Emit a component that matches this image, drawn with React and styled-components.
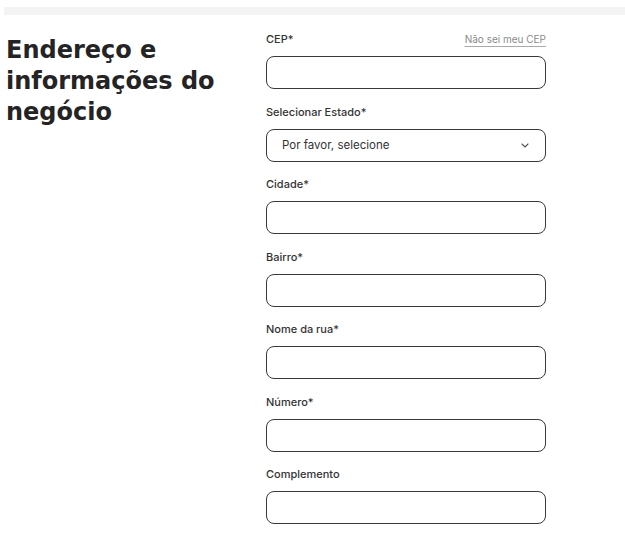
import React from "react";
import styled, { createGlobalStyle } from "styled-components";

const Global = createGlobalStyle`
  html, body { margin: 0; padding: 0; background: #fff; }
  body { font-family: "Inter", "Lato", sans-serif; color: #2b2b2b; }
`;

const Page = styled.div`
  width: 625px;
  height: 541px;
  overflow: hidden;
  padding-top: 7px;
  box-sizing: border-box;
`;

const TopBar = styled.div`
  margin-left: 4px;
  height: 8px;
  background: #f3f3f3;
`;

const Content = styled.div`
  display: flex;
  padding-top: 16px;
  padding-left: 6px;
`;

const Heading = styled.h1`
  margin: 0;
  width: 240px;
  font-family: "DejaVu Sans", "Inter", sans-serif;
  font-size: 24px;
  line-height: 31px;
  font-weight: 700;
  color: #242424;
  letter-spacing: 0;
  padding-top: 3.5px;
`;

const Form = styled.div`
  margin-left: 20px;
  width: 280px;
  display: flex;
  flex-direction: column;
  gap: 14.5px;
`;

const Field = styled.div`
  display: flex;
  flex-direction: column;
  gap: 9px;
`;

const LabelRow = styled.div`
  display: flex;
  justify-content: space-between;
  align-items: center;
  height: 16px;
`;

const Label = styled.label`
  font-size: 11px;
  line-height: 16px;
  color: #333;
  font-weight: 500;
`;

const HelpLink = styled.a`
  font-size: 10px;
  color: #8a8a8a;
  text-decoration: underline;
  text-decoration-color: #aaa;
  text-underline-offset: 3px;
  cursor: pointer;
`;

const Input = styled.div`
  height: 33px;
  box-sizing: border-box;
  border: 1.5px solid #3a3a3a;
  border-radius: 8px;
  display: flex;
  align-items: center;
  justify-content: space-between;
  padding: 0 16px 0 15px;
`;

const SelectText = styled.span`
  font-size: 11.5px;
  color: #333;
`;

const Chevron = () => (
  <svg width="8" height="5" viewBox="0 0 8 5" fill="none">
    <path d="M1 1l3 3 3-3" stroke="#555" strokeWidth="1.1" strokeLinecap="round" strokeLinejoin="round" />
  </svg>
);

const fields = [
  "Cidade*",
  "Bairro*",
  "Nome da rua*",
  "Número*",
  "Complemento",
];

export default function App() {
  return (
    <Page>
      <Global />
      <TopBar />
      <Content>
        <Heading>
          Endereço e
          <br />
          informações do
          <br />
          negócio
        </Heading>
        <Form>
          <Field>
            <LabelRow>
              <Label>CEP*</Label>
              <HelpLink>Não sei meu CEP</HelpLink>
            </LabelRow>
            <Input />
          </Field>
          <Field>
            <LabelRow>
              <Label>Selecionar Estado*</Label>
            </LabelRow>
            <Input>
              <SelectText>Por favor, selecione</SelectText>
              <Chevron />
            </Input>
          </Field>
          {fields.map((f) => (
            <Field key={f}>
              <LabelRow>
                <Label>{f}</Label>
              </LabelRow>
              <Input />
            </Field>
          ))}
        </Form>
      </Content>
    </Page>
  );
}
